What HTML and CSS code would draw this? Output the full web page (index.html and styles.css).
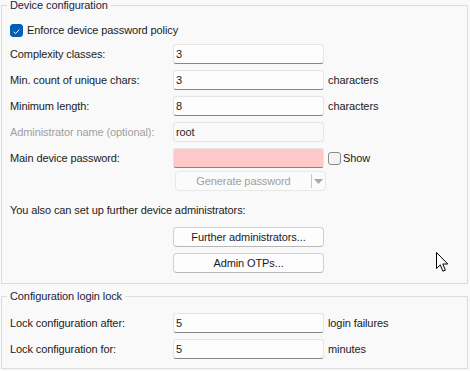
FILE: index.html
```html
<!DOCTYPE html>
<html lang="en">
<head>
  <meta charset="UTF-8">
  <title>Device configuration</title>
  <link rel="stylesheet" href="styles.css">
</head>
<body>
  <fieldset class="group first">
    <legend>Device configuration</legend>
    <div class="check-row">
      <span class="check on">
        <svg width="13" height="13" viewBox="0 0 13 13"><path d="M3.2 6.8 L5.4 9 L9.8 4.3" fill="none" stroke="#fff" stroke-width="1.1"/></svg>
      </span>
      <span>Enforce device password policy</span>
    </div>

    <div class="row first-row">
      <label>Complexity classes:</label>
      <div class="field">3</div>
    </div>
    <div class="row">
      <label>Min. count of unique chars:</label>
      <div class="field">3</div>
      <span class="unit">characters</span>
    </div>
    <div class="row">
      <label>Minimum length:</label>
      <div class="field">8</div>
      <span class="unit">characters</span>
    </div>
    <div class="row">
      <label class="disabled">Administrator name (optional):</label>
      <div class="field off">root</div>
    </div>
    <div class="row">
      <label>Main device password:</label>
      <div class="field bad"></div>
      <span class="check"></span>
      <span class="show">Show</span>
    </div>
    <div class="actions gen-row">
      <div class="split">
        <span class="split-main">Generate password</span>
        <span class="split-arrow">
          <svg width="9" height="5" viewBox="0 0 9 5"><path d="M0 0 H9 L4.5 5 Z" fill="#a8a8a8"/></svg>
        </span>
      </div>
    </div>

    <p class="note">You also can set up further device administrators:</p>

    <div class="actions">
      <button class="btn">Further administrators...</button>
    </div>
    <div class="actions small-gap">
      <button class="btn">Admin OTPs...</button>
    </div>
  </fieldset>

  <fieldset class="group second">
    <legend>Configuration login lock</legend>
    <div class="row lock-row">
      <label>Lock configuration after:</label>
      <div class="field">5</div>
      <span class="unit">login failures</span>
    </div>
    <div class="row">
      <label>Lock configuration for:</label>
      <div class="field">5</div>
      <span class="unit">minutes</span>
    </div>
  </fieldset>

  <svg class="cursor" width="14" height="21" viewBox="0 0 14 21">
    <path d="M0.5 0.5 L0.5 16.5 L4.3 12.9 L6.9 19.2 L9.4 18.2 L6.8 12 L11.8 12 Z" fill="#fff" stroke="#000" stroke-width="1" stroke-linejoin="miter"/>
  </svg>
</body>
</html>
```

FILE: styles.css
```css
body {
  margin: 0;
  background: #f9f9f9;
  font-family: "Liberation Sans", Arial, sans-serif;
  font-size: 11px;
  letter-spacing: -0.1px;
  color: #1b1b1b;
  position: relative;
  height: 371px;
  overflow: hidden;
}

.group {
  margin: 0 2px 0 1px;
  padding: 0 8px 10px 8px;
  border: 1px solid #dcdcdc;
  min-width: 0;
}

.group.first {
  margin-top: -2px;
}

.group.second {
  margin-top: 5px;
  padding-bottom: 9px;
}

legend {
  line-height: 14px;
  padding: 0 3px;
  margin-left: -3px;
  color: #1c2340;
}

.check-row {
  display: flex;
  align-items: center;
  height: 14px;
  margin-top: 11px;
  gap: 4px;
}

.check {
  flex: none;
  width: 13px;
  height: 13px;
  box-sizing: border-box;
  border: 1px solid #8b8b8b;
  border-radius: 3px;
  background: #f3f3f3;
  display: flex;
}

.check.on {
  border-color: #005fb8;
  background: #005fb8;
}

.row {
  display: flex;
  align-items: center;
  height: 20px;
  margin-top: 6px;
}

.row.first-row {
  margin-top: 7px;
}

.row.lock-row {
  margin-top: 10px;
}

.row label {
  flex: none;
  width: 163px;
}

.disabled {
  color: #a0a0a0;
}

.field {
  flex: none;
  width: 151px;
  height: 20px;
  box-sizing: border-box;
  padding: 0 2px;
  line-height: 18px;
  background: #fdfdfd;
  border: 1px solid #e5e5e5;
  border-bottom-color: #868686;
  border-radius: 3px;
}

.field.off {
  background: #f9f9f9;
  border-bottom-color: #e5e5e5;
  color: #2a2a2a;
}

.field.bad {
  background: #ffc8c8;
}

.unit {
  margin-left: 4px;
}

.row .check {
  margin-left: 4px;
}

.show {
  margin-left: 2px;
}

.actions {
  display: flex;
  padding-left: 163px;
  margin-top: 6px;
}

.gen-row {
  margin-top: 3px;
}

.split {
  display: flex;
  width: 151px;
  height: 20px;
  margin-left: 2px;
  box-sizing: border-box;
  border: 1px solid #e8e8e8;
  border-radius: 4px;
  background: #fbfbfb;
  color: #a0a0a0;
}

.split-main {
  flex: 1;
  text-align: center;
  line-height: 18px;
}

.split-arrow {
  width: 13px;
  margin: 2px 0;
  border-left: 1px solid #c8c8c8;
  display: flex;
  align-items: center;
  justify-content: center;
}

.note {
  margin: 11px 0 0 0;
  line-height: 16px;
}

.actions .btn {
  width: 151px;
  height: 20px;
  margin-top: 3px;
  padding: 0;
  font: inherit;
  letter-spacing: inherit;
  color: #1b1b1b;
  background: #fdfdfd;
  border: 1px solid #d0d0d0;
  border-bottom-color: #b8b8b8;
  border-radius: 4px;
}

.actions.small-gap {
  margin-top: 3px;
}

.cursor {
  position: absolute;
  left: 436px;
  top: 252px;
}
```
